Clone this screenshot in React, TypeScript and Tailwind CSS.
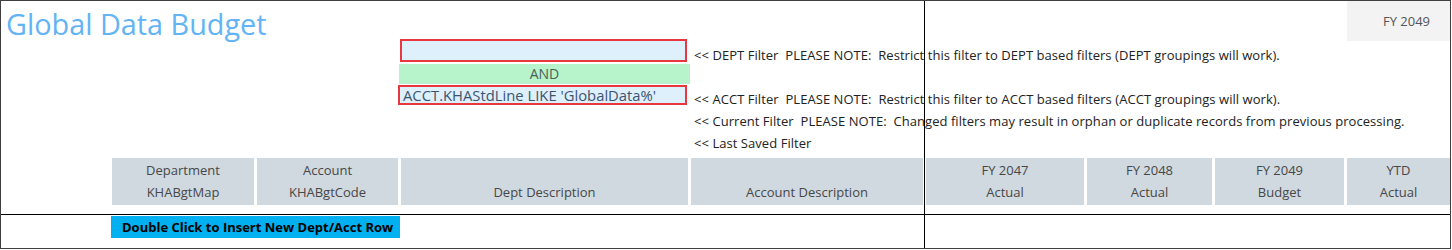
const headers = [
  { w: 'w-[142px]', top: 'Department', bottom: 'KHABgtMap' },
  { w: 'w-[141px]', top: 'Account', bottom: 'KHABgtCode' },
  { w: 'w-[287px]', top: '', bottom: 'Dept Description' },
  { w: 'w-[232px]', top: '', bottom: 'Account Description' },
  { w: 'w-[158px]', top: 'FY 2047', bottom: 'Actual' },
  { w: 'w-[125px]', top: 'FY 2048', bottom: 'Actual' },
  { w: 'w-[129px]', top: 'FY 2049', bottom: 'Budget' },
  { w: 'w-[103px]', top: 'YTD', bottom: 'Actual' },
];

const notes = [
  '<< DEPT Filter  PLEASE NOTE:  Restrict this filter to DEPT based filters (DEPT groupings will work).',
  '',
  '<< ACCT Filter  PLEASE NOTE:  Restrict this filter to ACCT based filters (ACCT groupings will work).',
  '<< Current Filter  PLEASE NOTE:  Changed filters may result in orphan or duplicate records from previous processing.',
  '<< Last Saved Filter',
];

export default function App() {
  return (
    <div className="relative w-[1451px] h-[249px] border border-[#3f3f3f] bg-white overflow-hidden font-['Open_Sans',sans-serif]">
      <div className="h-[214px] border-b border-black">
        <div className="flex h-[157px]">
          <div className="w-[397px] shrink-0 pl-[5px] pt-[3px]">
            <h1 className="text-[28.8px] leading-[40px] text-[#63b4f4] whitespace-nowrap">Global Data Budget</h1>
          </div>

          <div className="w-[293px] shrink-0 pt-[38px]">
            <div className="ml-[2px] w-[287px] h-[23px] border-2 border-[#e8383d] bg-[#ddf0fc]" />
            <div className="mt-[2px] ml-[1px] w-[291px] h-[20px] bg-[#b7f3cb] text-center text-[14px] leading-[20px] text-[#4b6158]">
              AND
            </div>
            <div className="mt-[1px] w-[289px] h-[20px] border-2 border-[#e8383d] bg-[#ddf0fc] pl-[3px] text-[14.8px] leading-[16px] text-[#3d5470] whitespace-nowrap">
              ACCT.KHAStdLine LIKE 'GlobalData%'
            </div>
          </div>

          <div className="flex-1 min-w-0 pl-[3px] pt-[43px]">
            {notes.map((n, i) => (
              <div key={i} className="h-[22px] whitespace-pre text-[13px] tracking-[0.05px] leading-[22px] text-[#222]">
                {n}
              </div>
            ))}
          </div>

          <div className="w-[103px] shrink-0 h-[40px] bg-[#f3f3f3] pl-[16px] text-center text-[13px] leading-[40px] text-[#555]">
            FY 2049
          </div>
        </div>

        <div className="flex gap-[3px] ml-[111px] h-[47px]">
          {headers.map((h, i) => (
            <div key={i} className={`${h.w} shrink-0 bg-[#d0d9df] flex flex-col pt-[1px] text-center text-[13px] leading-[22px] text-[#474747]`}>
              <div className="h-[22px]">{h.top}</div>
              <div className="h-[22px]">{h.bottom}</div>
            </div>
          ))}
        </div>
      </div>

      <div className="ml-[110px] mt-[1px] w-[289px] h-[22px] bg-[#00b0f0] pl-[11px] text-[13px] font-bold leading-[22px] text-black whitespace-nowrap">
        Double Click to Insert New Dept/Acct Row
      </div>

      <div className="absolute left-[923px] top-0 bottom-0 w-px bg-black" />
    </div>
  );
}
